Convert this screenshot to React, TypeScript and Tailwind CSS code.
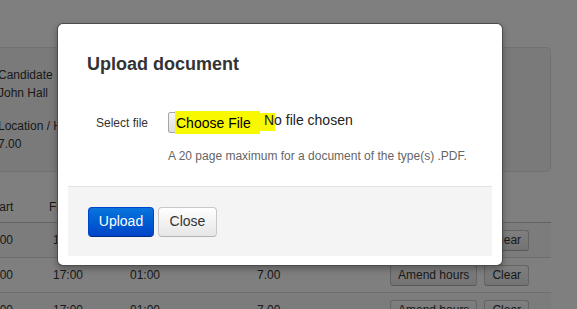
import React from 'react'

const rows = [
  { start: '07:00', finish: '17:00', brk: '01:00', hours: '7.00', striped: true },
  { start: '10:00', finish: '17:00', brk: '01:00', hours: '7.00', striped: false },
  { start: '10:00', finish: '17:00', brk: '01:00', hours: '7.00', striped: true },
]

function SmallButton({ children }: { children: React.ReactNode }) {
  return (
    <button className="h-[21px] px-[7px] text-[12px] leading-[14px] text-[#333] rounded-[3px] border border-[#c8c8c8] border-b-[#b3b3b3] bg-gradient-to-b from-white to-[#e6e6e6]">
      {children}
    </button>
  )
}

export default function App() {
  return (
    <div className="relative w-[577px] h-[309px] overflow-hidden bg-white font-['Liberation_Sans',Arial,sans-serif] text-[#333]">
      {/* Page behind the dialog */}
      <div className="ml-[-20px] w-[571px] pt-[47px]">
        <div className="h-[125px] rounded-[4px] border border-[#e3e3e3] bg-[#f5f5f5] pl-[17px] pt-[18px] text-[12px] leading-[18px]">
          <div>Candidate</div>
          <div>John Hall</div>
          <div className="mt-[15px]">Location / Hours</div>
          <div>7.00</div>
        </div>

        <div className="mt-[19px] text-[12px]">
          <div className="grid grid-cols-[61px_81px_127px_133px_1fr] h-[32px] items-center border-b border-[#c4c4c4]">
            <div className="pl-[8px]">Start</div>
            <div className="pl-[8px]">Finish</div>
            <div className="pl-[8px]">Break</div>
            <div className="pl-[8px]">Hours</div>
            <div />
          </div>
          {rows.map((r, i) => (
            <div
              key={i}
              className={`grid grid-cols-[61px_81px_127px_133px_1fr] h-[35px] items-center border-b border-[#dddddd] ${r.striped ? 'bg-[#f9f9f9]' : 'bg-white'}`}
            >
              <div className="pl-[3px]">{r.start}</div>
              <div className="pl-[12px]">{r.finish}</div>
              <div className="pl-[8px]">{r.brk}</div>
              <div className="pl-[8px]">{r.hours}</div>
              <div className="pl-[8px] flex gap-[7px]">
                <SmallButton>Amend hours</SmallButton>
                <SmallButton>Clear</SmallButton>
              </div>
            </div>
          ))}
        </div>
      </div>

      {/* Backdrop */}
      <div className="absolute inset-0 bg-black/50" />

      {/* Dialog */}
      <div className="absolute left-[57px] top-[23px] w-[446px] h-[243px] rounded-[6px] border border-black/70 bg-white px-[10px] pt-[10px] pb-[9px] shadow-[0_3px_7px_rgba(0,0,0,0.3)]">
        <h3 className="pl-[19px] pt-[20px] text-[18px] leading-[20px] font-bold text-[#333]">Upload document</h3>

        <div className="mt-[38px] flex items-start h-[21px]">
          <label className="w-[100px] pl-[28px] mt-[4px] text-[12px] leading-[14px] text-[#333]">Select file</label>
          <div className="relative h-[21px] w-[92px] flex items-center rounded-[2px] border border-[#a6a6a6] bg-gradient-to-b from-[#f6f6f6] to-[#dedede]">
            <span className="absolute left-[6px] top-[-2px] right-[-1px] bottom-[-2px] bg-[#f8f800]" />
            <span className="relative pl-[7px] text-[14px] leading-[16px] text-black">Choose File</span>
          </div>
          <div className="relative ml-[4px] text-[14px] leading-[16px] text-[#222]">
            <span className="absolute left-[-4px] top-[1px] w-[15px] h-[18px] bg-[#f8f800]" />
            <span className="relative">No file chosen</span>
          </div>
        </div>

        <p className="mt-[14px] pl-[100px] text-[12px] leading-[18px] text-[#666]">
          A 20 page maximum for a document of the type(s) .PDF.
        </p>

        <div className="mt-[21px] h-[70px] border-t border-[#e2e2e2] bg-[#f4f4f4] pl-[20px] flex items-center gap-[4px]">
          <button className="w-[66px] h-[30px] flex items-center justify-center rounded-[4px] border border-[#0044cc] border-b-[#002a80] bg-gradient-to-b from-[#0b74dc] to-[#0044c8] text-white text-[14px]">
            Upload
          </button>
          <button className="w-[59px] h-[30px] flex items-center justify-center rounded-[4px] border border-[#c8c8c8] border-b-[#b3b3b3] bg-gradient-to-b from-white to-[#e6e6e6] text-[#333] text-[14px]">
            Close
          </button>
        </div>
      </div>
    </div>
  )
}
